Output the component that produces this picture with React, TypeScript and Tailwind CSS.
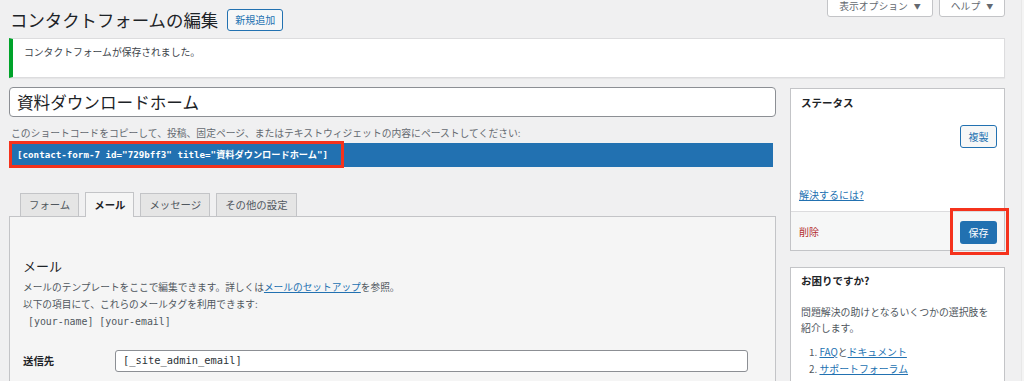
export default function App() {
  return (
    <div className="w-[1024px] h-[381px] overflow-hidden bg-[#f0f0f1] flex font-['Noto_Sans_CJK_JP',sans-serif] text-[#1d2327]">
      <div className="w-[1021px] pl-[9px] pr-[16px]">
        {/* header */}
        <div className="h-[38px] flex items-start justify-between">
          <div className="flex items-center gap-[9px] mt-[9px] pl-px">
            <h1 className="text-[17.4px] leading-[22px] text-[#1d2327]">コンタクトフォームの編集</h1>
            <button className="h-[22px] w-[56px] rounded-[3px] border border-[#2271b1] bg-[#f6f7f7] text-[10px] leading-[20px] text-[#2271b1]">
              新規追加
            </button>
          </div>
          <div className="flex gap-[6px] -mt-[4px]">
            <button className="h-[21px] w-[106px] pb-[1px] rounded-b-[3px] border border-[#c3c4c7] bg-white text-[9.8px] leading-[12px] text-[#646970] flex items-center justify-center gap-[6px]">
              表示オプション <span className="text-[7px]">▼</span>
            </button>
            <button className="h-[21px] w-[66px] pb-[1px] rounded-b-[3px] border border-[#c3c4c7] bg-white text-[9.8px] leading-[12px] text-[#646970] flex items-center justify-center gap-[6px]">
              ヘルプ <span className="text-[7px]">▼</span>
            </button>
          </div>
        </div>

        {/* notice */}
        <div className="h-[40px] bg-white border border-[#dcdcde] border-l-[4px] border-l-[#00a32a] shadow-[0_1px_1px_rgba(0,0,0,0.04)] pl-[11px] pt-[5px]">
          <p className="text-[9.8px] leading-[16px] text-[#3c434a]">コンタクトフォームが保存されました。</p>
        </div>

        <div className="mt-[9px] flex gap-[14px]">
          {/* main column */}
          <div className="w-[767px]">
            <div className="h-[30px] rounded-[4px] border border-[#8c8f94] bg-white px-[7px] flex items-center">
              <span className="text-[16.6px] leading-[22px]">資料ダウンロードホーム</span>
            </div>
            <p className="mt-[9px] pl-[2px] text-[9.8px] leading-[14px] text-[#646970]">
              このショートコードをコピーして、投稿、固定ページ、またはテキストウィジェットの内容にペーストしてください:
            </p>
            <div className="relative mt-[3px] h-[24px] w-[764px] bg-[#2271b1] flex items-center pl-[8px]">
              <span className="font-['DejaVu_Sans_Mono','Noto_Sans_CJK_JP',monospace] font-bold text-[9.2px] text-white whitespace-nowrap">
                [contact-form-7 id="729bff3" title="資料ダウンロードホーム"]
              </span>
              <div className="absolute left-0 -top-[2px] -bottom-[1px] w-[335px] border-[3px] border-[#f5321c]" />
            </div>

            {/* tabs */}
            <div className="mt-[25px] flex gap-[6px] pl-[11px] items-end">
              <div className="h-[23px] px-[8px] border border-b-0 border-[#c3c4c7] bg-[#e5e5e5] text-[10.4px] leading-[22px] text-[#50575e]">フォーム</div>
              <div className="h-[25px] -mb-px px-[8px] border border-b-0 border-[#c3c4c7] bg-[#f5f5f5] text-[10.4px] leading-[24px] font-bold text-[#1d2327]">メール</div>
              <div className="h-[23px] px-[8px] border border-b-0 border-[#c3c4c7] bg-[#e5e5e5] text-[10.4px] leading-[22px] text-[#50575e]">メッセージ</div>
              <div className="h-[23px] px-[8px] border border-b-0 border-[#c3c4c7] bg-[#e5e5e5] text-[10.4px] leading-[22px] text-[#50575e]">その他の設定</div>
            </div>
            <div className="h-[200px] border border-[#c3c4c7] bg-[#f5f5f5] pl-[13px] pt-[40px]">
              <h2 className="text-[13px] leading-[18px] text-[#1d2327]">メール</h2>
              <div className="mt-[4px] text-[9.7px] leading-[17px] text-[#50575e]">
                <p>
                  メールのテンプレートをここで編集できます。詳しくは
                  <a className="text-[#2271b1] underline">メールのセットアップ</a>
                  を参照。
                </p>
                <p>以下の項目にて、これらのメールタグを利用できます:</p>
                <p className="pl-[5px] font-['DejaVu_Sans_Mono',monospace] text-[9.9px]">[your-name] [your-email]</p>
              </div>
              <div className="mt-[20px] flex items-center">
                <span className="w-[92px] text-[10.4px] font-bold text-[#1d2327]">送信先</span>
                <div className="w-[633px] h-[22px] rounded-[3px] border border-[#8c8f94] bg-white pl-[7px] flex items-center">
                  <span className="font-['DejaVu_Sans_Mono',monospace] text-[10.4px] text-[#2c3338]">[_site_admin_email]</span>
                </div>
              </div>
            </div>
          </div>

          {/* sidebar */}
          <div className="w-[215px] mt-px">
            <div className="border border-[#c3c4c7] bg-white">
              <h3 className="px-[10px] pt-[7px] text-[10.5px] leading-[14px] font-bold">ステータス</h3>
              <div className="mt-[15px] flex justify-end pr-[7px]">
                <button className="h-[23px] w-[37px] rounded-[3px] border border-[#2271b1] bg-[#f6f7f7] text-[10px] text-[#2271b1]">複製</button>
              </div>
              <div className="mt-[40px] pl-[8px] pb-[9px] text-[10px] leading-[14px]">
                <a className="text-[#2271b1] underline">解決するには?</a>
              </div>
              <div className="h-[39px] border-t border-[#dcdcde] bg-[#f6f7f7] flex items-center justify-between pl-[8px] pr-[7px]">
                <span className="text-[10px] text-[#b32d2e]">削除</span>
                <div className="relative">
                  <button className="h-[23px] w-[37px] rounded-[3px] bg-[#2271b1] text-[10px] text-white">保存</button>
                  <div className="absolute -left-[10px] -right-[12px] -top-[10px] -bottom-[11px] border-[3px] border-[#f5321c]" />
                </div>
              </div>
            </div>

            <div className="mt-[16px] h-[130px] border border-[#c3c4c7] bg-white px-[10px] pt-[6px]">
              <h3 className="text-[10.5px] leading-[14px] font-bold">お困りですか?</h3>
              <p className="mt-[16px] text-[9.9px] leading-[16px] text-[#50575e]">
                問題解決の助けとなるいくつかの選択肢を紹介します。
              </p>
              <ol className="mt-[8px] pl-[8px] text-[9.9px] leading-[17px] text-[#50575e]">
                <li>
                  1. <a className="text-[#2271b1] underline">FAQ</a>と<a className="text-[#2271b1] underline">ドキュメント</a>
                </li>
                <li>
                  2. <a className="text-[#2271b1] underline">サポートフォーラム</a>
                </li>
              </ol>
            </div>
          </div>
        </div>
      </div>
      <div className="w-[3px] bg-[#f4f4f4] border-l border-[#e8e8e8]" />
    </div>
  )
}
